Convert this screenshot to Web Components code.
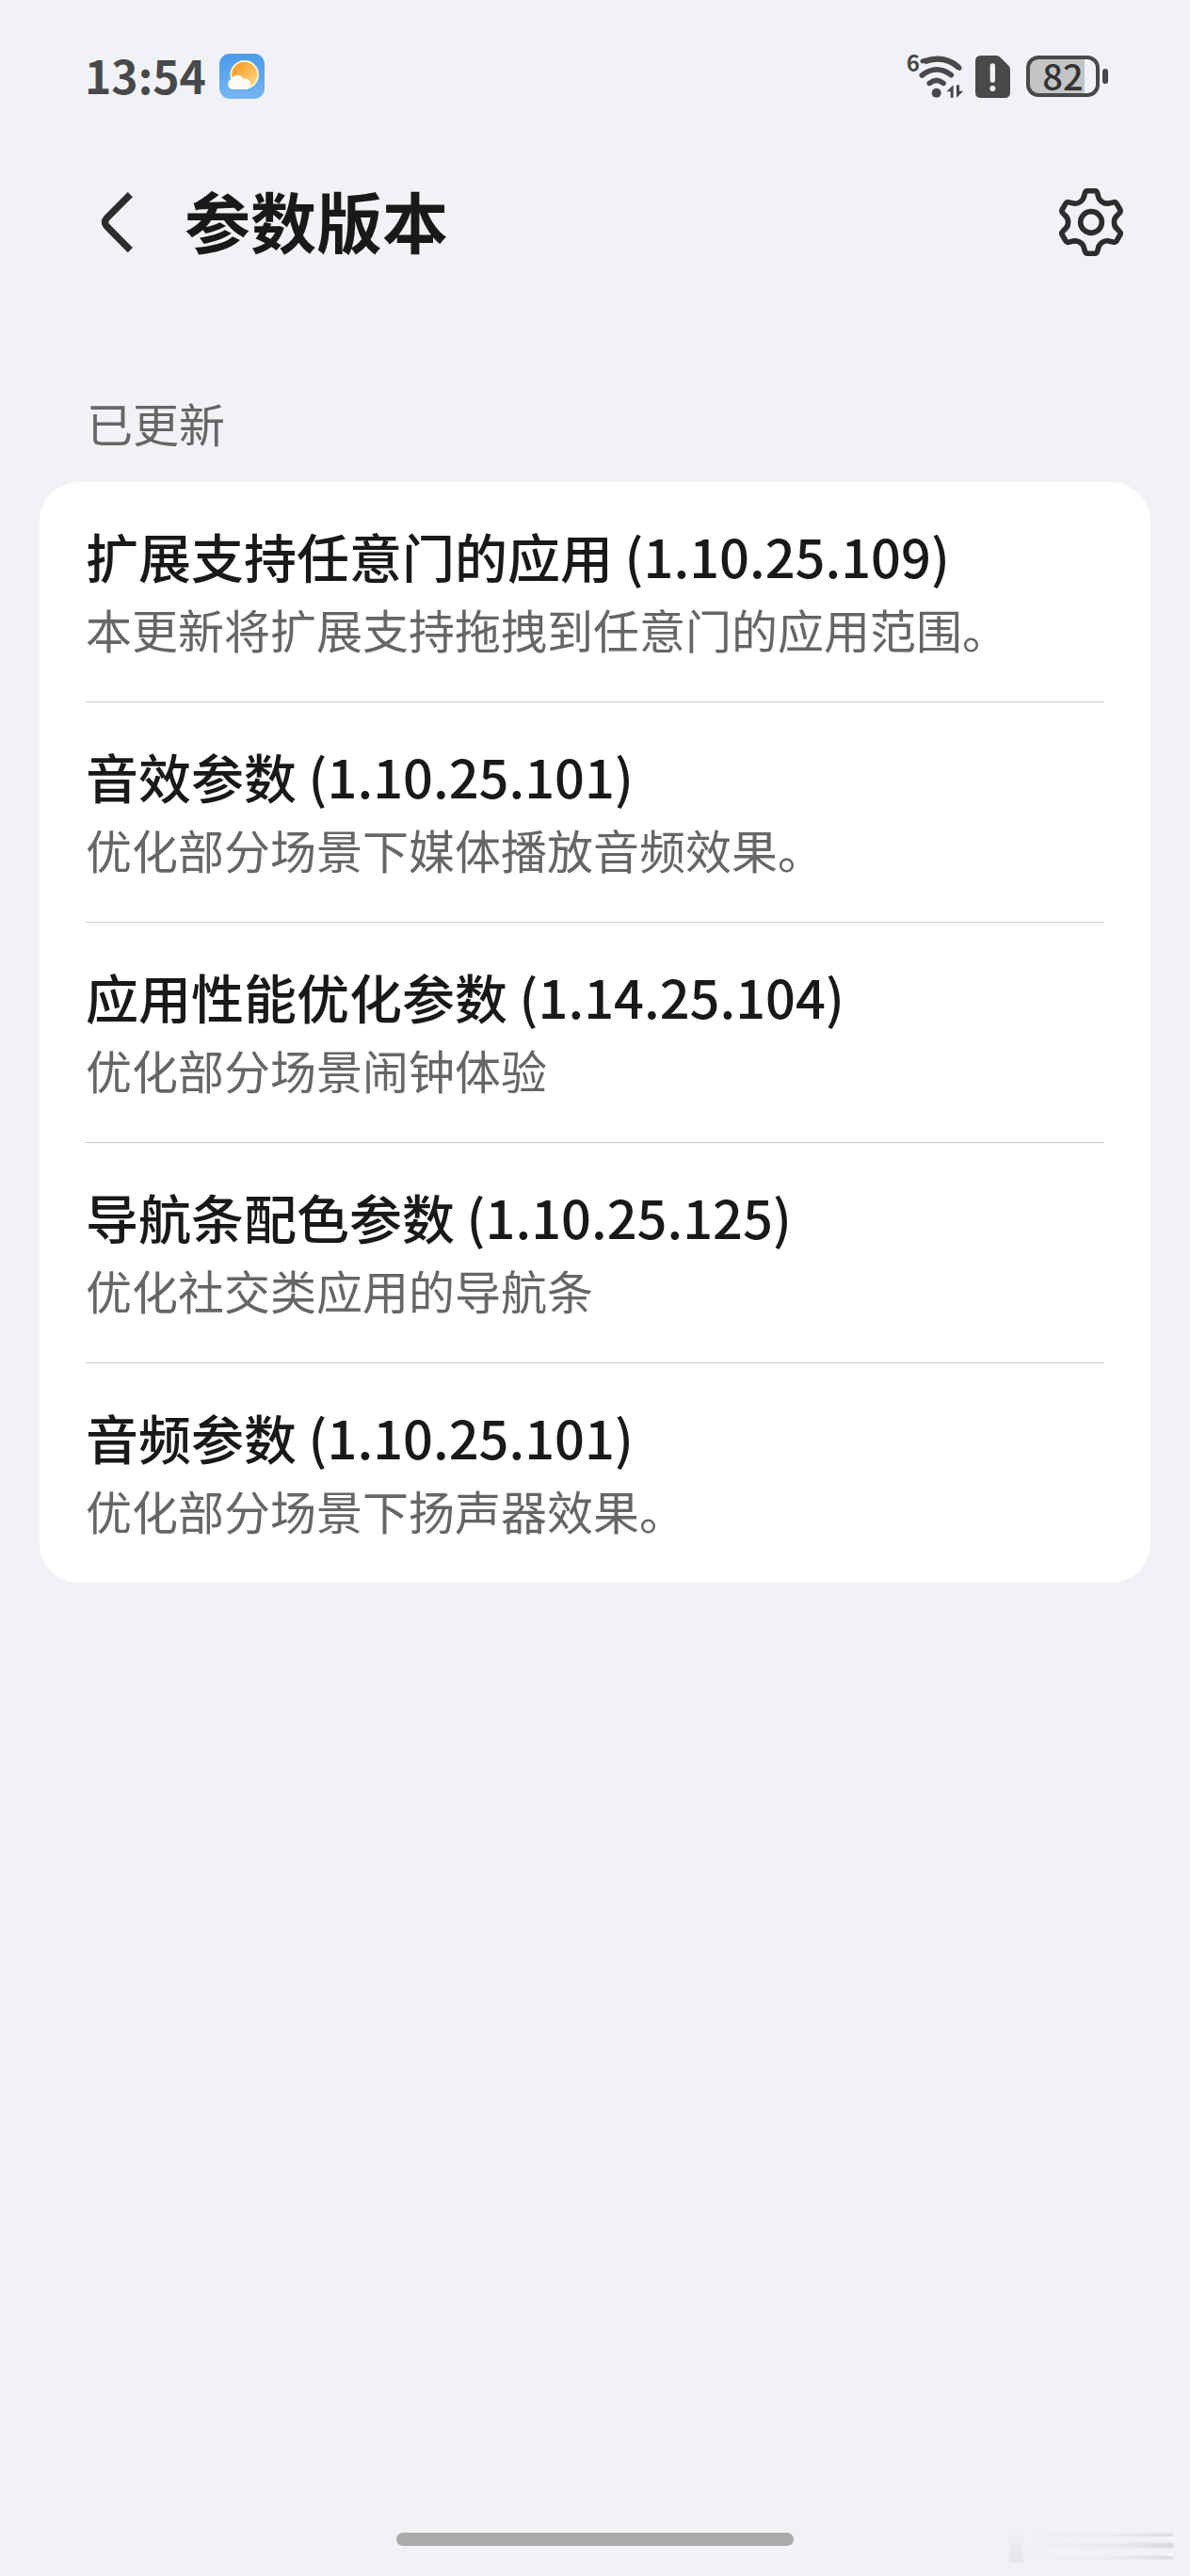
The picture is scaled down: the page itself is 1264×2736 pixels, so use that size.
<!DOCTYPE html>
<html lang="zh-CN">
<head>
<meta charset="utf-8">
<meta name="viewport" content="width=device-width, initial-scale=1">
<title>参数版本</title>
<style>
	body {
		margin: 0;
		background: #f1f2f6;
		color: #191919;
		font-family: 'Noto Sans CJK SC', 'Noto Sans', sans-serif;
	}
</style>
</head>
<body>
<version-page>
	<status-bar slot="status" time="13:54" battery="82"></status-bar>
	<title-bar slot="title">参数版本</title-bar>
	<update-list>
		<span slot="label">已更新</span>
		<update-item>
			<span slot="name">扩展支持任意门的应用 (1.10.25.109)</span>
			本更新将扩展支持拖拽到任意门的应用范围。
		</update-item>
		<update-item>
			<span slot="name">音效参数 (1.10.25.101)</span>
			优化部分场景下媒体播放音频效果。
		</update-item>
		<update-item>
			<span slot="name">应用性能优化参数 (1.14.25.104)</span>
			优化部分场景闹钟体验
		</update-item>
		<update-item>
			<span slot="name">导航条配色参数 (1.10.25.125)</span>
			优化社交类应用的导航条
		</update-item>
		<update-item>
			<span slot="name">音频参数 (1.10.25.101)</span>
			优化部分场景下扬声器效果。
		</update-item>
	</update-list>
	<home-indicator slot="footer"></home-indicator>
</version-page>

<script>
/**
 * Create a template from a string of markup.
 * @param {string} markup
 */
function createTemplate(markup) {
	const template = document.createElement('template')
	template.innerHTML = markup
	return template
}

/**
 * Base class, clones the template of the element into its shadow root.
 */
class BaseElement extends HTMLElement {
	constructor() {
		super()
		const shadowRoot = this.attachShadow({ mode: 'open' })
		shadowRoot.appendChild(this.constructor.template.content.cloneNode(true))
	}
}

class VersionPage extends BaseElement {
	static template = createTemplate(`
		<style>
			:host {
				display: flex;
				flex-direction: column;
				min-height: 100vh;
			}

			main {
				flex: 1;
				padding: 109px 42px 0;
			}
		</style>
		<slot name="status"></slot>
		<slot name="title"></slot>
		<main><slot></slot></main>
		<slot name="footer"></slot>
	`)
}

class StatusBar extends BaseElement {
	static template = createTemplate(`
		<style>
			:host {
				display: flex;
				align-items: center;
				justify-content: space-between;
				height: 162px;
				padding: 0 87px 0 90px;
				color: #48494a;
			}

			.group {
				display: flex;
				align-items: center;
			}

			svg {
				display: block;
			}

			#time {
				margin-right: 14px;
				padding-bottom: 4px;
				font-size: 48px;
				font-weight: 700;
				line-height: 56px;
			}

			.wifi {
				margin-right: 13px;
			}

			.sim {
				margin-right: 17px;
			}

			.battery {
				box-sizing: border-box;
				width: 78px;
				height: 44px;
				border: 4px solid #48494a;
				border-radius: 13px;
				background: linear-gradient(90deg, #c3c4c6 83%, transparent 83%);
				color: #333;
				font-size: 38px;
				font-weight: 500;
				line-height: 34px;
				text-align: center;
			}

			.cap {
				width: 6px;
				height: 16px;
				margin-left: 3px;
				border-radius: 3px;
				background: #48494a;
			}
		</style>
		<div class="group">
			<time id="time"></time>
			<svg width="48" height="48" viewBox="0 0 144 144">
				<defs>
					<linearGradient id="sky" x1="0" y1="0" x2="0" y2="1">
						<stop offset="0" stop-color="#4a9bea"/>
						<stop offset="1" stop-color="#76b6f3"/>
					</linearGradient>
					<linearGradient id="sun" x1="0" y1="0" x2="1" y2="1">
						<stop offset="0.2" stop-color="#fa9f2c"/>
						<stop offset="1" stop-color="#ffdf8a"/>
					</linearGradient>
				</defs>
				<rect width="144" height="144" rx="34" fill="url(#sky)"/>
				<circle cx="80" cy="67" r="43" fill="url(#sun)" stroke="#fff0c4" stroke-width="6"/>
				<path d="M43 114a17 17 0 0 1-4-33a20 20 0 0 1 37-1a17 17 0 0 1 12 34z" fill="#fffaf0"/>
			</svg>
		</div>
		<div class="group">
			<svg class="wifi" width="68" height="72" viewBox="46 13 204 216" fill="none" stroke="currentColor" stroke-linecap="round">
				<text x="69" y="107" fill="currentColor" stroke="none" font-size="72" font-weight="700">6</text>
				<path d="M126 74Q188 51 237 93" stroke-width="18" stroke-linecap="butt"/>
				<path d="M121 73l6-2M235 92l3 3" stroke-width="15"/>
				<path d="M119 118Q165 82 212 117" stroke-width="17"/>
				<path d="M143 143Q165 125 187 143" stroke-width="17"/>
				<circle cx="165" cy="174" r="15" fill="currentColor" stroke="none"/>
				<path d="M219 149V189H210V170H197ZM229 149H238V168H251L229 189Z" fill="currentColor" stroke="none"/>
			</svg>
			<svg class="sim" width="37" height="45" viewBox="0 0 111 135">
				<path d="M18 0H66Q74 0 79 5L106 32Q111 37 111 45V117Q111 135 93 135H18Q0 135 0 117V18Q0 0 18 0Z" fill="currentColor"/>
				<path d="M55 33V78" stroke="#f1f2f6" stroke-width="16" stroke-linecap="round"/>
				<circle cx="55" cy="105" r="9" fill="#f1f2f6"/>
			</svg>
			<div class="battery" id="battery"></div>
			<div class="cap"></div>
		</div>
	`)

	connectedCallback() {
		this.shadowRoot.getElementById('time').textContent = this.getAttribute('time')
		this.shadowRoot.getElementById('battery').textContent = this.getAttribute('battery')
	}
}

class TitleBar extends BaseElement {
	static template = createTemplate(`
		<style>
			:host {
				display: flex;
				align-items: center;
				height: 148px;
				padding: 0 69px 0 92px;
			}

			button {
				display: block;
				padding: 0;
				border: 0;
				background: none;
				color: #2c2d2e;
			}

			svg {
				display: block;
			}

			h1 {
				flex: 1;
				margin: 0 0 4px 38px;
				font-size: 70px;
				font-weight: 700;
				line-height: 96px;
			}
		</style>
		<button type="button" aria-label="返回">
			<svg width="66" height="72" viewBox="36 62 198 216" fill="none" stroke="currentColor" stroke-width="22">
				<path d="M175 82L100 157Q89 170 100 183L175 259"/>
			</svg>
		</button>
		<h1><slot></slot></h1>
		<button type="button" aria-label="设置">
			<svg width="72" height="72" viewBox="-108 -108 216 216" fill="none" stroke="currentColor" stroke-width="17" stroke-linecap="round">
				<defs>
					<path id="tooth" d="M-24-78L-20-92Q-18-100-11-100H11Q18-100 20-92L24-78C27-67 44-57 55-60"/>
				</defs>
				<use href="#tooth"/>
				<use href="#tooth" transform="rotate(60)"/>
				<use href="#tooth" transform="rotate(120)"/>
				<use href="#tooth" transform="rotate(180)"/>
				<use href="#tooth" transform="rotate(240)"/>
				<use href="#tooth" transform="rotate(300)"/>
				<circle r="34"/>
			</svg>
		</button>
	`)
}

class UpdateList extends BaseElement {
	static template = createTemplate(`
		<style>
			:host {
				display: block;
			}

			h2 {
				margin: 0 0 33px;
				padding: 0 50px;
				color: #666;
				font-size: 49px;
				font-weight: 400;
				line-height: 60px;
			}

			.card {
				padding: 0 49px;
				border-radius: 42px;
				background: #fff;
			}
		</style>
		<h2><slot name="label"></slot></h2>
		<div class="card" role="list"><slot></slot></div>
	`)
}

class UpdateItem extends BaseElement {
	static template = createTemplate(`
		<style>
			:host {
				display: block;
				padding: 38px 0 39px;
				border-bottom: 1px solid #ccc;
			}

			:host(:last-child) {
				border-bottom: 0;
			}

			h3 {
				margin: 0;
				font-size: 56px;
				font-weight: 500;
				line-height: 80px;
			}

			p {
				margin: 0;
				color: #666;
				font-size: 49px;
				line-height: 76px;
			}
		</style>
		<h3><slot name="name"></slot></h3>
		<p><slot></slot></p>
	`)

	connectedCallback() {
		this.setAttribute('role', 'listitem')
	}
}

class HomeIndicator extends BaseElement {
	static template = createTemplate(`
		<style>
			:host {
				position: relative;
				display: flex;
				justify-content: center;
				padding: 30px 0 32px;
			}

			.handle {
				width: 422px;
				height: 14px;
				border-radius: 7px;
				background: #a9abaa;
			}

			/* faint streaks lying over the corner of the screen */
			svg {
				position: absolute;
				right: 8px;
				bottom: 10px;
				filter: blur(1px);
			}
		</style>
		<div class="handle"></div>
		<svg width="188" height="40" viewBox="0 0 188 40" aria-hidden="true">
			<defs>
				<linearGradient id="streak">
					<stop offset="0" stop-color="#dcdde0" stop-opacity="0"/>
					<stop offset="0.6" stop-color="#dcdde0" stop-opacity="0.4"/>
					<stop offset="1" stop-color="#d3d4d8"/>
				</linearGradient>
				<linearGradient id="smudge" x1="0" y1="0" x2="0" y2="1">
					<stop offset="0" stop-color="#e3e4e7" stop-opacity="0"/>
					<stop offset="1" stop-color="#e3e4e7"/>
				</linearGradient>
			</defs>
			<rect x="4" y="2" width="15" height="34" fill="url(#smudge)"/>
			<path d="M20 5H178V8H20ZM20 15H178V20H20ZM20 29H178V32H20Z" fill="url(#streak)"/>
			<path d="M172 8h7v3h-7zM172 26h7v3h-7z" fill="#fff"/>
		</svg>
	`)
}

customElements.define('version-page', VersionPage)
customElements.define('status-bar', StatusBar)
customElements.define('title-bar', TitleBar)
customElements.define('update-list', UpdateList)
customElements.define('update-item', UpdateItem)
customElements.define('home-indicator', HomeIndicator)
</script>
</body>
</html>
